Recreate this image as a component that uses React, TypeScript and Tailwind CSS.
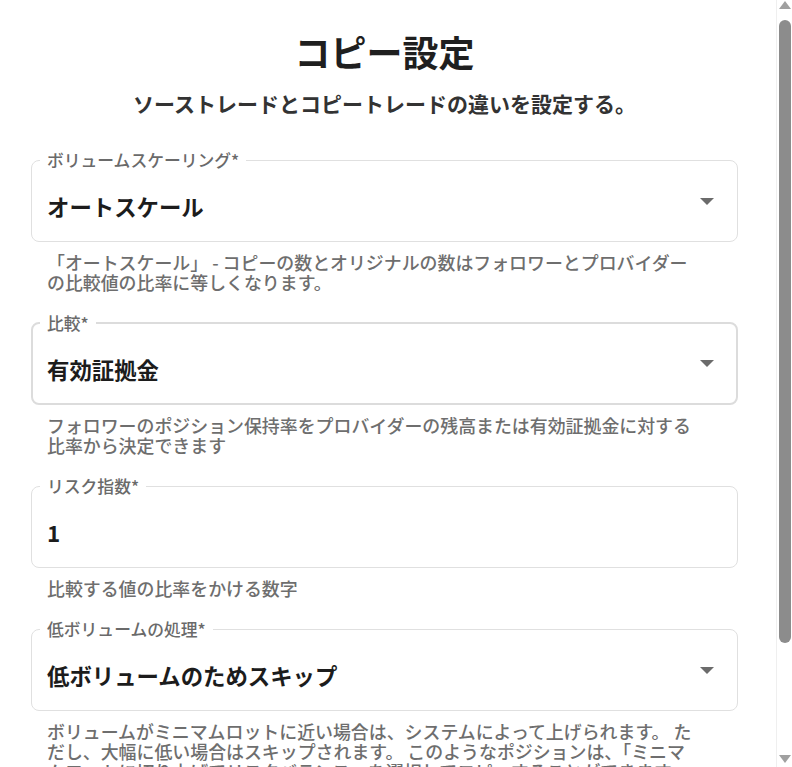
import React from "react";

function Arrow() {
  return (
    <svg width="14" height="7" viewBox="0 0 14 7" className="shrink-0 mb-[9px]">
      <polygon points="0,0 14,0 7,7" fill="#6b6b6b" />
    </svg>
  );
}

type FieldProps = {
  label: string;
  value: string;
  helper: string[];
  select?: boolean;
  strong?: boolean;
};

function Field({ label, value, helper, select = true, strong = false }: FieldProps) {
  return (
    <div className="flex flex-col">
      <fieldset
        className={
          strong
            ? "w-full rounded-[8px] border-2 border-solid border-[#dcdcdc]"
            : "w-full rounded-[8px] border border-solid border-[#e0e0e0]"
        }
      >
        <legend
          className={
            strong
              ? "ml-[7px] px-[7px] text-[16.8px] leading-[20px] font-medium text-[#6a6a6a]"
              : "ml-[8px] px-[7px] text-[16.8px] leading-[20px] font-medium text-[#6a6a6a]"
          }
        >
          {label}
        </legend>
        <div
          className={
            strong
              ? "flex h-[70px] items-center justify-between pl-[14px] pr-[22px]"
              : "flex h-[71px] items-center justify-between pl-[15px] pr-[23px]"
          }
        >
          <span className="mt-[1px] text-[22.4px] leading-[30px] font-bold text-[#1c1c1c]">
            {value}
          </span>
          {select ? <Arrow /> : null}
        </div>
      </fieldset>
      <p className="mt-[10px] pl-[16px] text-[17.92px] leading-[20px] font-medium text-[#6e6e6e]">
        {helper.map((line) => (
          <span key={line} className="block whitespace-nowrap">
            {line}
          </span>
        ))}
      </p>
    </div>
  );
}

function ScrollTriangle({ down = false }: { down?: boolean }) {
  return (
    <svg width="12" height="8" viewBox="0 0 12 8">
      <polygon points={down ? "0,0 12,0 6,8" : "0,8 12,8 6,0"} fill="#a0a0a0" />
    </svg>
  );
}

export default function App() {
  return (
    <div className="flex h-screen overflow-hidden bg-white font-['Noto_Sans_CJK_JP',sans-serif]">
      <div className="min-w-0 flex-1 overflow-hidden">
        <div className="pl-[31px] pr-[38px] pt-[29px] pb-[140px]">
          <h1 className="text-center text-[36px] leading-[44px] font-bold text-[#1f1f1f]">
            コピー設定
          </h1>
          <p className="mt-[16px] text-center text-[21px] leading-[28px] font-bold text-[#333333]">
            ソーストレードとコピートレードの違いを設定する。
          </p>
          <div className="mt-[33px] flex flex-col gap-[21px]">
            <Field
              label="ボリュームスケーリング*"
              value="オートスケール"
              helper={[
                "「オートスケール」 - コピーの数とオリジナルの数はフォロワーとプロバイダー",
                "の比較値の比率に等しくなります。",
              ]}
            />
            <Field
              label="比較*"
              value="有効証拠金"
              strong
              helper={[
                "フォロワーのポジション保持率をプロバイダーの残高または有効証拠金に対する",
                "比率から決定できます",
              ]}
            />
            <Field
              label="リスク指数*"
              value="1"
              select={false}
              helper={["比較する値の比率をかける数字"]}
            />
            <Field
              label="低ボリュームの処理*"
              value="低ボリュームのためスキップ"
              helper={[
                "ボリュームがミニマムロットに近い場合は、システムによって上げられます。 た",
                "だし、大幅に低い場合はスキップされます。 このようなポジションは、「ミニマ",
                "ムロットに切り上げてリスクバランス」を選択してコピーすることができます。",
              ]}
            />
          </div>
        </div>
      </div>
      <div className="flex w-[16px] shrink-0 flex-col border-l border-solid border-[#efefef] bg-white">
        <div className="flex h-[12px] items-start justify-center pt-[1px]">
          <ScrollTriangle />
        </div>
        <div className="ml-[2px] mt-[8px] h-[623px] w-[12px] rounded-full bg-[#8c8c8c]" />
        <div className="flex-1" />
        <div className="flex h-[14px] items-start justify-center pt-[2px]">
          <ScrollTriangle down />
        </div>
      </div>
    </div>
  );
}
